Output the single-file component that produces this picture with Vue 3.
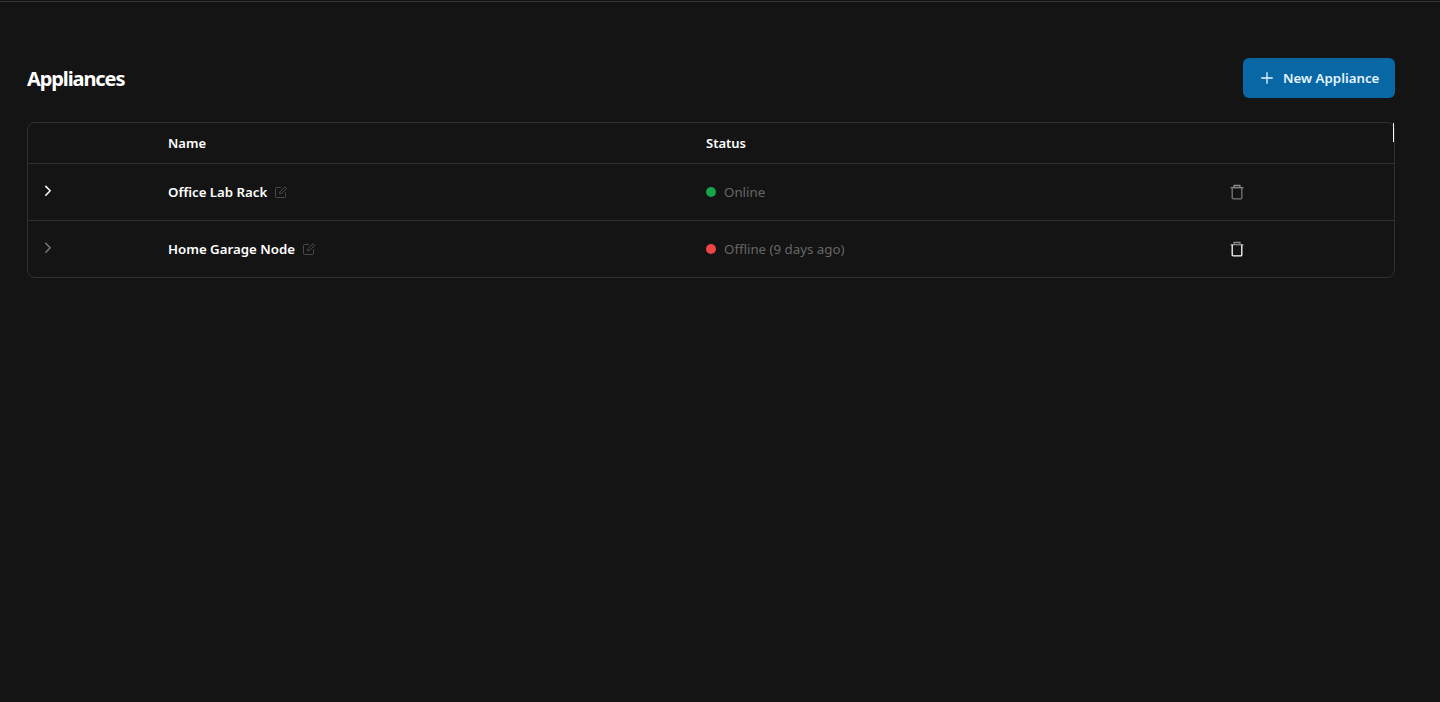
<script setup>
const rows = [
  { name: 'Office Lab Rack', status: 'Online', dot: 'green', chev: 'bright', trash: 'dim' },
  { name: 'Home Garage Node', status: 'Offline (9 days ago)', dot: 'red', chev: 'dim', trash: 'bright' },
]
</script>

<template>
  <div class="page">
    <div class="rule"></div>
    <div class="content">
      <header class="head">
        <h1>Appliances</h1>
        <button class="new">
          <svg class="plus" width="16" height="16" viewBox="0 0 16 16" fill="none" stroke="currentColor" stroke-width="1.3" stroke-linecap="round"><path d="M8 2.7v10.6M2.7 8h10.6" /></svg>
          <span>New Appliance</span>
        </button>
      </header>
      <div class="table">
        <i class="caret"></i>
        <div class="row top">
          <div></div>
          <div class="th">Name</div>
          <div class="th">Status</div>
          <div></div>
        </div>
        <div v-for="r in rows" :key="r.name" class="row body">
          <div class="chev" :class="r.chev">
            <svg width="16" height="16" viewBox="0 0 16 16" fill="none" stroke="currentColor" stroke-width="1.5" stroke-linecap="round" stroke-linejoin="round"><path d="M5.8 3.4 10.2 7.8 5.8 12.2" /></svg>
          </div>
          <div class="name">
            <span>{{ r.name }}</span>
            <svg class="edit" width="14" height="14" viewBox="0 0 14 14" fill="none" stroke="currentColor" stroke-width="1" stroke-linejoin="round"><path d="M7 2.5H2.5a1 1 0 0 0-1 1v8a1 1 0 0 0 1 1h8a1 1 0 0 0 1-1V7.5" /><path d="M5.5 8.8 6 6.8l5-5 1.6 1.6-5 5z" /></svg>
          </div>
          <div class="status">
            <b class="dot" :class="r.dot"></b>
            <span>{{ r.status }}</span>
          </div>
          <div class="trash" :class="r.trash">
            <svg width="16" height="16" viewBox="0 0 16 16" fill="none" stroke="currentColor" stroke-width="1.3" stroke-linejoin="round"><path d="M1.5 3.7h13" stroke="#8a8a8a" /><path d="M5 3.7V1.5h6v2.2" stroke="#8a8a8a" /><path d="M3.2 3.7v10.2a1 1 0 0 0 1 1h7.6a1 1 0 0 0 1-1V3.7" /></svg>
          </div>
        </div>
      </div>
    </div>
  </div>
</template>

<style>
html, body { margin: 0; background: #141414; }
</style>

<style scoped>
.page {
  height: 702px;
  box-sizing: border-box;
  padding-top: 1px;
  background: #141414;
  font-family: "Noto Sans", sans-serif;
  color: #fff;
}
.rule { height: 1px; background: #333; }
.content { padding: 56px 45px 0 27px; }
.head {
  display: flex;
  justify-content: space-between;
  align-items: center;
  height: 40px;
  margin-bottom: 24px;
}
h1 {
  margin: 0;
  font-size: 20px;
  font-weight: 700;
  letter-spacing: -1.1px;
}
.new {
  display: flex;
  align-items: center;
  gap: 8px;
  width: 152px;
  height: 40px;
  box-sizing: border-box;
  padding: 0 16px;
  border: 0;
  border-radius: 6px;
  background: #0868a6;
  color: #e6f4ff;
  font: 600 13.3px "Noto Sans", sans-serif;
  white-space: nowrap;
}
.plus { flex: none; }
.table {
  position: relative;
  border: 1px solid #303030;
  border-radius: 8px;
}
.caret {
  position: absolute;
  top: 0;
  right: 0;
  width: 1px;
  height: 19px;
  background: #fff;
}
.row {
  display: grid;
  grid-template-columns: 140px 538px 523px 1fr;
  align-items: center;
}
.top { height: 40px; }
.body { height: 56px; border-top: 1px solid #303030; }
.th { font-size: 13px; font-weight: 600; }
.name {
  display: flex;
  align-items: center;
  gap: 7px;
  font-size: 13.25px;
  font-weight: 600;
}
.edit { color: #4a4a4a; }
.chev { display: flex; padding-left: 12px; padding-bottom: 3px; }
.bright { color: #fff; }
.dim { color: #777; }
.status {
  display: flex;
  align-items: center;
  gap: 8px;
  font-size: 13.3px;
  line-height: 18px;
  color: #666;
}
.status span { position: relative; top: -0.5px; }
.dot {
  width: 10px;
  height: 10px;
  border-radius: 50%;
}
.green { background: #16a34a; }
.red { background: #ef4444; }
.trash { display: flex; }
</style>
